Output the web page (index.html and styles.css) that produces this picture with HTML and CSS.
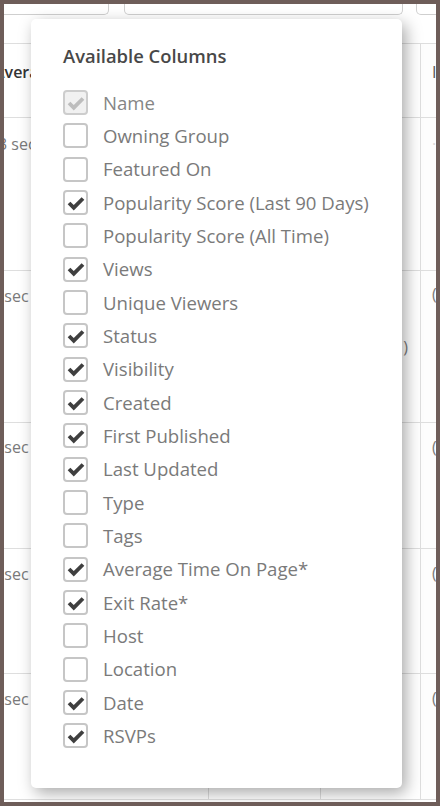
FILE: index.html
```html
<!DOCTYPE html>
<html>
<head>
<meta charset="utf-8">
<link rel="stylesheet" href="styles.css">
</head>
<body>
<div class="frame">
  <div class="inner">
    <div class="topbar">
      <div class="tbox tbox1"></div>
      <div class="tbox tbox2"></div>
      <div class="tbox tbox3"></div>
    </div>
    <div class="table">
      <div class="row head" style="height:74px">
        <div class="cell c1"><span class="shift-h">Average Time</span></div>
        <div class="cell c2"></div>
        <div class="cell c3"></div>
        <div class="cell c4"><span class="dark">I</span></div>
      </div>
      <div class="row" style="height:153px">
        <div class="cell c1 pt16"><span class="shift-a">3 sec</span></div>
        <div class="cell c2"></div>
        <div class="cell c3"></div>
        <div class="cell c4 pt16 faint">·</div>
      </div>
      <div class="row" style="height:152px">
        <div class="cell c1 pt15"><span class="shift-b">1 sec</span></div>
        <div class="cell c2"></div>
        <div class="cell c3 mid"><span class="end">(1)</span></div>
        <div class="cell c4 pt13">(</div>
      </div>
      <div class="row" style="height:126px">
        <div class="cell c1 pt14"><span class="shift-b">1 sec</span></div>
        <div class="cell c2"></div>
        <div class="cell c3"></div>
        <div class="cell c4 pt14">(</div>
      </div>
      <div class="row" style="height:125px">
        <div class="cell c1 pt15"><span class="shift-b">1 sec</span></div>
        <div class="cell c2"></div>
        <div class="cell c3"></div>
        <div class="cell c4 pt14">(</div>
      </div>
      <div class="row" style="height:126px">
        <div class="cell c1 pt15"><span class="shift-b">1 sec</span></div>
        <div class="cell c2"></div>
        <div class="cell c3"></div>
        <div class="cell c4 pt14">(</div>
      </div>
    </div>

    <div class="popup">
      <h2 class="title">Available Columns</h2>
      <ul class="list">
        <li class="item disabled"><span class="box"><svg viewBox="0 0 16 12"><path d="M0.6 6.3 L3 3.9 L6 6.9 L13 -0.1 L15.4 2.3 L6 11.7 Z"/></svg></span><span class="label">Name</span></li>
        <li class="item"><span class="box"></span><span class="label">Owning Group</span></li>
        <li class="item"><span class="box"></span><span class="label">Featured On</span></li>
        <li class="item"><span class="box"><svg viewBox="0 0 16 12"><path d="M0.6 6.3 L3 3.9 L6 6.9 L13 -0.1 L15.4 2.3 L6 11.7 Z"/></svg></span><span class="label">Popularity Score (Last 90 Days)</span></li>
        <li class="item"><span class="box"></span><span class="label">Popularity Score (All Time)</span></li>
        <li class="item"><span class="box"><svg viewBox="0 0 16 12"><path d="M0.6 6.3 L3 3.9 L6 6.9 L13 -0.1 L15.4 2.3 L6 11.7 Z"/></svg></span><span class="label">Views</span></li>
        <li class="item"><span class="box"></span><span class="label">Unique Viewers</span></li>
        <li class="item"><span class="box"><svg viewBox="0 0 16 12"><path d="M0.6 6.3 L3 3.9 L6 6.9 L13 -0.1 L15.4 2.3 L6 11.7 Z"/></svg></span><span class="label">Status</span></li>
        <li class="item"><span class="box"><svg viewBox="0 0 16 12"><path d="M0.6 6.3 L3 3.9 L6 6.9 L13 -0.1 L15.4 2.3 L6 11.7 Z"/></svg></span><span class="label">Visibility</span></li>
        <li class="item"><span class="box"><svg viewBox="0 0 16 12"><path d="M0.6 6.3 L3 3.9 L6 6.9 L13 -0.1 L15.4 2.3 L6 11.7 Z"/></svg></span><span class="label">Created</span></li>
        <li class="item"><span class="box"><svg viewBox="0 0 16 12"><path d="M0.6 6.3 L3 3.9 L6 6.9 L13 -0.1 L15.4 2.3 L6 11.7 Z"/></svg></span><span class="label">First Published</span></li>
        <li class="item"><span class="box"><svg viewBox="0 0 16 12"><path d="M0.6 6.3 L3 3.9 L6 6.9 L13 -0.1 L15.4 2.3 L6 11.7 Z"/></svg></span><span class="label">Last Updated</span></li>
        <li class="item"><span class="box"></span><span class="label">Type</span></li>
        <li class="item"><span class="box"></span><span class="label">Tags</span></li>
        <li class="item"><span class="box"><svg viewBox="0 0 16 12"><path d="M0.6 6.3 L3 3.9 L6 6.9 L13 -0.1 L15.4 2.3 L6 11.7 Z"/></svg></span><span class="label">Average Time On Page*</span></li>
        <li class="item"><span class="box"><svg viewBox="0 0 16 12"><path d="M0.6 6.3 L3 3.9 L6 6.9 L13 -0.1 L15.4 2.3 L6 11.7 Z"/></svg></span><span class="label">Exit Rate*</span></li>
        <li class="item"><span class="box"></span><span class="label">Host</span></li>
        <li class="item"><span class="box"></span><span class="label">Location</span></li>
        <li class="item"><span class="box"><svg viewBox="0 0 16 12"><path d="M0.6 6.3 L3 3.9 L6 6.9 L13 -0.1 L15.4 2.3 L6 11.7 Z"/></svg></span><span class="label">Date</span></li>
        <li class="item"><span class="box"><svg viewBox="0 0 16 12"><path d="M0.6 6.3 L3 3.9 L6 6.9 L13 -0.1 L15.4 2.3 L6 11.7 Z"/></svg></span><span class="label">RSVPs</span></li>
      </ul>
    </div>
  </div>
</div>
</body>
</html>
```

FILE: styles.css
```css
* { box-sizing: border-box; }
html, body { margin: 0; padding: 0; }
body {
  width: 440px;
  height: 806px;
  font-family: "Open Sans", "Noto Sans", sans-serif;
  background: #6e5d59;
}
.frame {
  width: 440px;
  height: 806px;
  border: 4px solid #6e5d59;
}
.inner {
  position: relative;
  width: 100%;
  height: 100%;
  overflow: hidden;
  background: #fff;
}
.topbar {
  display: flex;
  height: 39px;
}
.tbox {
  height: 11px;
  border: 1px solid #cfcfcf;
  border-top: none;
  border-radius: 0 0 5px 5px;
  flex: none;
}
.tbox1 { margin-left: -12px; width: 117px; }
.tbox2 { margin-left: 15px; width: 279px; }
.tbox3 { margin-left: 13px; width: 40px; }

.table {
  border-top: 1px solid #dedede;
}
.row {
  display: grid;
  grid-template-columns: 204px 112px 100px 1fr;
  border-bottom: 1px solid #dedede;
}
.cell {
  font-size: 16px;
  line-height: 20px;
  color: #7a7a7a;
  white-space: nowrap;
}
.c2, .c3, .c4 { border-left: 1px solid #dedede; }
.c4 { padding-left: 11px; background: #fdfdfd; }
.head .cell { padding-top: 18px; }
.head .c1 { font-weight: 600; color: #333; }
.shift-h { display: inline-block; margin-left: -10px; }
.shift-a { display: inline-block; margin-left: -6px; }
.shift-b { display: inline-block; margin-left: -13px; }
.dark { color: #555; font-weight: 400; }
.faint { color: #d8d8d8; }
.pt16 { padding-top: 16px; }
.pt15 { padding-top: 15px; }
.pt14 { padding-top: 14px; }
.pt13 { padding-top: 13px; }
.mid {
  display: flex;
  align-items: center;
  justify-content: flex-end;
  padding-right: 12px;
}

.popup {
  position: absolute;
  left: 27px;
  top: 15px;
  width: 371px;
  height: 769px;
  background: #fff;
  border-radius: 5px;
  box-shadow: 4px 5px 16px rgba(0, 0, 0, 0.34);
  padding: 25px 0 0 32px;
}
.title {
  margin: 0;
  font-size: 18.4px;
  line-height: 24px;
  font-weight: 600;
  color: #484848;
}
.list {
  list-style: none;
  margin: 18px 0 0;
  padding: 0;
}
.item {
  display: flex;
  align-items: center;
  height: 33.33px;
}
.box {
  flex: none;
  width: 25px;
  height: 25px;
  border: 2px solid #c6c6c6;
  border-radius: 4px;
  display: flex;
  align-items: center;
  justify-content: center;
  padding-top: 2px;
}
.box svg {
  width: 18px;
  height: 14px;
  fill: #3f3f3f;
}
.disabled .box {
  background: #f1f1f1;
  border-color: #cdcdcd;
}
.disabled .box svg { fill: #bdbdbd; }
.label {
  margin-left: 15px;
  font-size: 18.6px;
  line-height: 24px;
  color: #7a7a7a;
  white-space: nowrap;
}
.disabled .label { color: #858585; }
```
